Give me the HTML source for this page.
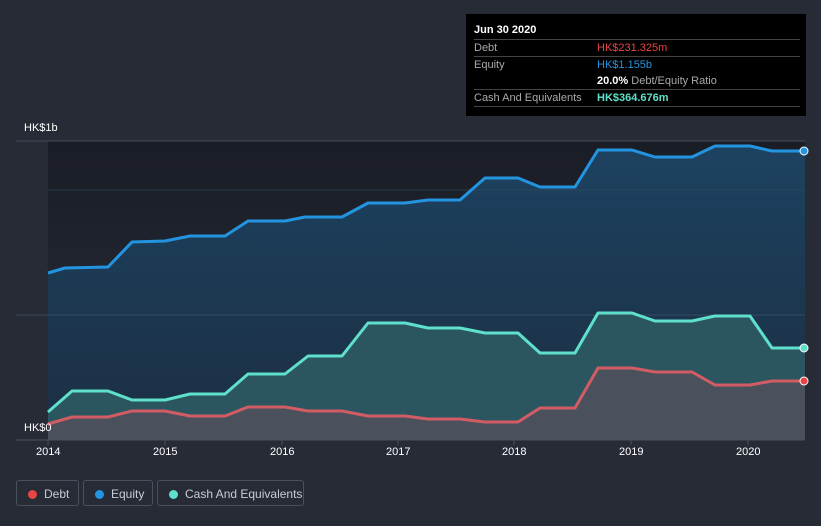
<!DOCTYPE html>
<html><head><meta charset="utf-8"><style>
body{margin:0;width:821px;height:526px;background:#262b36;font-family:"Liberation Sans",sans-serif;overflow:hidden;position:relative}
.tt{position:absolute;left:466px;top:14px;width:340px;height:102px;background:#000;color:#fff;font-size:11px}
.tt .r{position:absolute;left:8px;width:326px;border-top:1px solid #444;height:16px}
.tt span{position:absolute;top:2px}
.lg{position:absolute;top:480px;height:26px;border:1px solid #4a505c;border-radius:3px;color:#c8ccd2;font-size:12px;line-height:26px;box-sizing:border-box}
.lg i{position:absolute;left:11px;top:9px;width:9px;height:9px;border-radius:50%}
.lg b{font-weight:normal;position:absolute;left:27px}
.ax{position:absolute;top:446px;color:#fff;font-size:11px}
</style></head><body>
<svg width="821" height="526" style="position:absolute;left:0;top:0">
<defs><linearGradient id="bg" x1="0" y1="0" x2="0" y2="1"><stop offset="0" stop-color="#1a1d25"/><stop offset="1" stop-color="#262d3a"/></linearGradient>
<linearGradient id="eq" x1="0" y1="0" x2="0" y2="1"><stop offset="0" stop-color="#1d4260"/><stop offset="1" stop-color="#1b2e42"/></linearGradient></defs>
<rect x="48" y="141" width="757" height="299" fill="url(#bg)"/>
<path d="M48,273 L65,268 L108,267 L132,242 L165,241 L190,236 L225,236 L248,221 L285,221 L305,217 L342,217 L368,203 L405,203 L428,200 L460,200 L485,178 L518,178 L540,187 L575,187 L598,150 L632,150 L655,157 L692,157 L715,146 L750,146 L772,151 L805,151 L805,440 L48,440Z" fill="url(#eq)"/>
<path d="M48,412 L72,391 L108,391 L132,400 L165,400 L190,394 L225,394 L248,374 L285,374 L308,356 L342,356 L368,323 L405,323 L428,328 L460,328 L485,333 L518,333 L540,353 L575,353 L598,313 L632,313 L655,321 L692,321 L715,316 L750,316 L772,348 L805,348 L805,440 L48,440Z" fill="#2b5660"/>
<path d="M48,424 L72,417 L108,417 L132,411 L165,411 L190,416 L225,416 L248,407 L285,407 L308,411 L342,411 L368,416 L405,416 L428,419 L460,419 L485,422 L518,422 L540,408 L575,408 L598,368 L632,368 L655,372 L692,372 L715,385 L750,385 L772,381 L805,381 L805,440 L48,440Z" fill="#4a515c"/>
<line x1="16" y1="141" x2="805" y2="141" stroke="#444b57"/>
<line x1="48" y1="190" x2="805" y2="190" stroke="#2f4a60" stroke-opacity=".6"/>
<line x1="16" y1="315" x2="805" y2="315" stroke="#3e5566" stroke-opacity=".7"/>
<line x1="16" y1="440" x2="805" y2="440" stroke="#4a505c"/>
<g fill="none" stroke-width="3" stroke-linejoin="round">
<path d="M48,273 L65,268 L108,267 L132,242 L165,241 L190,236 L225,236 L248,221 L285,221 L305,217 L342,217 L368,203 L405,203 L428,200 L460,200 L485,178 L518,178 L540,187 L575,187 L598,150 L632,150 L655,157 L692,157 L715,146 L750,146 L772,151 L805,151" stroke="#2394e0"/>
<path d="M48,412 L72,391 L108,391 L132,400 L165,400 L190,394 L225,394 L248,374 L285,374 L308,356 L342,356 L368,323 L405,323 L428,328 L460,328 L485,333 L518,333 L540,353 L575,353 L598,313 L632,313 L655,321 L692,321 L715,316 L750,316 L772,348 L805,348" stroke="#5ee0cc"/>
<path d="M48,424 L72,417 L108,417 L132,411 L165,411 L190,416 L225,416 L248,407 L285,407 L308,411 L342,411 L368,416 L405,416 L428,419 L460,419 L485,422 L518,422 L540,408 L575,408 L598,368 L632,368 L655,372 L692,372 L715,385 L750,385 L772,381 L805,381" stroke="#d25c64"/>
</g>
<circle cx="804" cy="151" r="4" fill="#2394e0" stroke="#fff"/>
<circle cx="804" cy="348" r="4" fill="#5ee0cc" stroke="#fff"/>
<circle cx="804" cy="381" r="4" fill="#e84545" stroke="#fff"/>
<g stroke="#4a505c"><line x1="48" y1="440" x2="48" y2="445"/><line x1="165" y1="440" x2="165" y2="445"/><line x1="282" y1="440" x2="282" y2="445"/><line x1="398" y1="440" x2="398" y2="445"/><line x1="514" y1="440" x2="514" y2="445"/><line x1="631" y1="440" x2="631" y2="445"/><line x1="748" y1="440" x2="748" y2="445"/></g>
</svg>
<div style="position:absolute;left:24px;top:122px;color:#fff;font-size:11px">HK$1b</div>
<div style="position:absolute;left:24px;top:422px;color:#fff;font-size:11px">HK$0</div>
<div class="ax" style="left:36px">2014</div><div class="ax" style="left:153px">2015</div><div class="ax" style="left:270px">2016</div><div class="ax" style="left:386px">2017</div><div class="ax" style="left:502px">2018</div><div class="ax" style="left:619px">2019</div><div class="ax" style="left:736px">2020</div>
<div class="tt">
<div style="position:absolute;left:8px;top:10px;font-weight:bold">Jun 30 2020</div>
<div class="r" style="top:25px"><span style="left:0;color:#aaa">Debt</span><span style="left:123px;color:#e84545">HK$231.325m</span></div>
<div class="r" style="top:42px;border-top-color:#444"><span style="left:0;color:#aaa">Equity</span><span style="left:123px;color:#2394e0">HK$1.155b</span></div>
<div style="position:absolute;left:131px;top:61px"><b>20.0%</b> <span style="position:static;color:#aaa">Debt/Equity Ratio</span></div>
<div class="r" style="top:75px"><span style="left:0;color:#aaa">Cash And Equivalents</span><span style="left:123px;color:#5ee0cc;font-weight:bold">HK$364.676m</span></div>
<div class="r" style="top:92px;height:0"></div>
</div>
<div class="lg" style="left:16px;width:63px"><i style="background:#e84545"></i><b>Debt</b></div>
<div class="lg" style="left:83px;width:70px"><i style="background:#2394e0"></i><b>Equity</b></div>
<div class="lg" style="left:157px;width:147px"><i style="background:#5ee0cc"></i><b>Cash And Equivalents</b></div>
</body></html>
